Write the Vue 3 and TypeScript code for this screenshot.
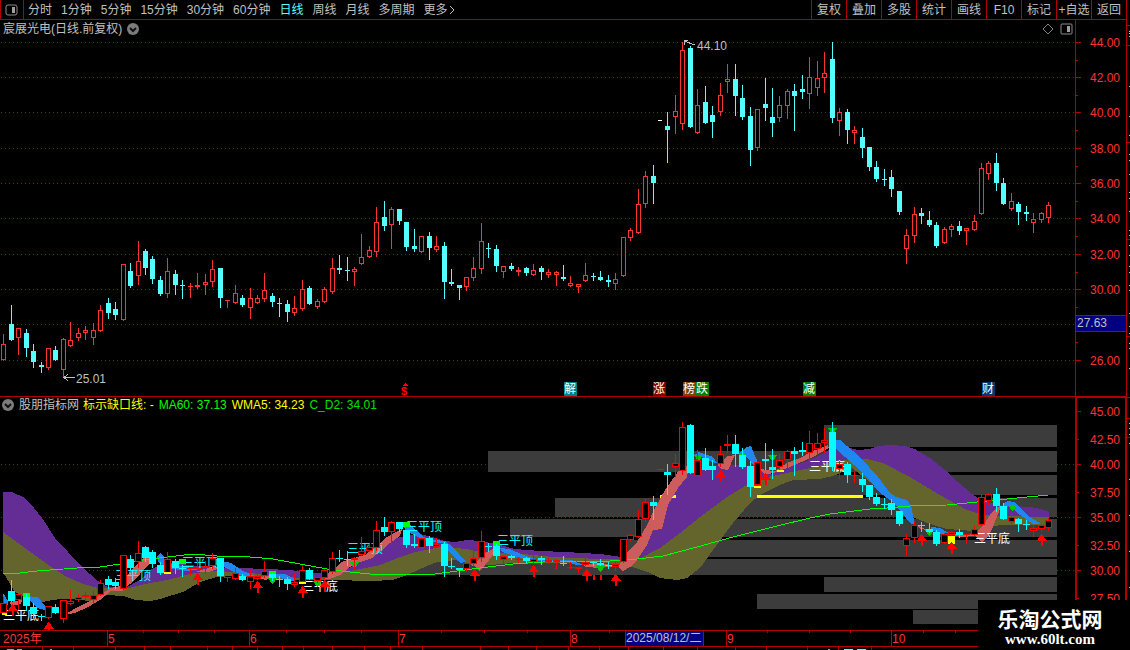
<script setup lang="ts">
import { ref } from 'vue'

type Candle = { x: number; up: boolean; h: number; t: number; b: number; l: number }

const periods = ['分时', '1分钟', '5分钟', '15分钟', '30分钟', '60分钟', '日线', '周线', '月线', '多周期', '更多']
const tools = ['复权', '叠加', '多股', '统计', '画线', 'F10', '标记', '+自选', '返回']
const active = ref('日线')

// one entry per session: direction, high, body top, body bottom, low
const source = `R334,344,360,360 C305,324,340,340 R328,328,338,354 C329,333,348,356 C344,351,362,367 C362,365,367,372 R348,348,368,369
C346,350,360,360 R338,339,370,376 R322,340,346,346 R328,333,338,340 R326,330,333,339 R323,330,338,344 R305,310,331,331
C298,303,313,318 C302,309,315,319 R264,264,320,320 C263,271,286,287 R241,261,276,284 C249,251,268,274 C256,259,279,283
C276,280,294,295 R258,271,294,297 C270,274,285,294 C280,285,286,298 R283,286,287,297 R273,285,287,288 R274,282,285,294
R260,269,282,286 C268,268,298,307 R300,300,301,307 R285,293,303,303 C295,298,305,306 R288,298,308,318 R295,298,303,303
R273,290,299,301 C293,296,302,306 C298,303,304,316 C300,304,312,321 R296,308,313,315 R280,289,309,310 C286,288,304,304
R299,301,307,308 R287,289,302,302 R258,268,292,293 C255,268,270,273 C257,270,271,280 R267,269,272,285 R234,257,264,264
R246,250,257,257 R207,222,252,256 C201,217,226,230 R207,209,225,248 C209,209,221,224 C222,222,247,250 C229,246,249,251
R236,236,252,252 C232,236,248,259 R236,246,250,251 C242,246,282,298 C269,282,284,285 C285,285,288,299 R277,277,287,290
R257,268,278,280 R223,241,269,273 C243,248,249,257 C245,249,266,271 R266,266,272,277 C263,266,269,270 R267,270,272,275
C267,268,273,275 R264,270,275,275 C266,268,272,279 R269,272,275,277 R271,272,275,285 C265,277,279,280 R276,283,286,286
R284,284,287,292 R263,275,281,281 C273,276,277,280 C271,277,280,280 C275,280,282,286 R273,279,284,289 R237,237,276,276
R228,230,238,240 R189,204,233,233 R171,176,204,207 C165,176,183,203 G120,120,121,121 C112,126,130,162 R95,111,117,133
R42,50,124,129 C46,48,127,127 R89,105,133,133 C86,102,123,123 C106,115,122,137 R83,95,112,115 R64,79,82,92
C64,79,96,115 C85,98,117,119 C107,116,150,165 R109,109,148,150 C78,104,108,120 C88,117,123,136 R96,105,118,121
R89,91,106,118 C84,91,96,130 C75,89,92,98 R57,77,94,108 R61,78,88,95 R52,73,78,92 C42,59,118,122
R108,112,121,135 C109,112,130,143 R126,130,133,143 C128,137,148,157 C147,147,167,170 C161,167,179,181 C169,179,180,185
C170,177,189,196 C191,191,212,214 R229,235,249,263 R207,214,236,242 C208,213,216,223 C211,220,225,226 C222,225,246,247
R227,229,243,243 R224,226,230,236 C221,226,231,234 R228,228,231,244 R215,221,230,230 R163,168,214,214 R161,163,174,179
C153,163,183,190 C178,183,204,204 R193,201,209,210 C202,204,212,224 C206,212,214,220 R213,219,223,232 R212,213,220,222
R202,205,218,222`

const gapIndex = 88
const all: Candle[] = source.split(/\s+/).map((s, i) => {
  const [h, t, b, l] = s.slice(1).split(',').map(Number)
  return { x: Math.round(3.2 + 7.464 * i), up: s[0] !== 'C', h, t, b, l }
})
const daily = all.filter((_, i) => i !== gapIndex)
const gap = all[gapIndex]
const rescale = (y: number) => Math.round(570.5 - (289.5 - y) * 0.601)
const study = daily.map((c) => {
  const t = rescale(c.t)
  return { ...c, h: rescale(c.h), t, b: Math.max(rescale(c.b), t + 1), l: rescale(c.l) }
})

const upperGrid = [42, 77, 112, 148, 183, 218, 254, 289, 324, 360]
const upperLabels = [[42, '44.00'], [77, '42.00'], [112, '40.00'], [148, '38.00'], [183, '36.00'], [218, '34.00'], [254, '32.00'], [289, '30.00'], [360, '26.00']] as [number, string][]
const upperMinor = [60, 95, 130, 166, 201, 236, 272, 307, 342]
const lowerGrid = [464, 517, 570]
const lowerLabels = [[411, '45.00'], [439, '42.50'], [464, '40.00'], [492, '37.50'], [517, '35.00'], [545, '32.50'], [570, '30.00'], [598, '27.50']] as [number, string][]

const tags = [[564, '解', '#008080'], [653, '涨', '#800000'], [683, '榜', '#804000'], [696, '跌', '#008000'], [803, '减', '#008000'], [982, '财', '#003870']] as [number, string, string][]

// volume-profile rows: left, top, height
const profile = [[824, 425, 22], [488, 451, 21], [700, 475, 20], [555, 498, 19], [510, 519, 18], [623, 540, 17], [405, 559, 16], [824, 577, 15], [757, 594, 15], [913, 610, 14]]

const purple = '3,492 12,492 25,498 34,508 42,518 55,538 68,552 81,566 98,581 108,587 125,588 140,580 152,569 165,562 190,565 215,568 240,568 265,569 290,570 310,573 330,573 345,570 360,562 375,552 388,542 400,537 420,534 432,537 445,541 455,542 467,540 480,541 500,545 515,549 540,551 565,552 600,554 622,557 640,548 655,520 668,500 678,482 690,470 705,467 720,465 746,465 760,471 772,474 787,467 805,462 820,455 832,448 847,447 858,450 870,449 878,446 890,445 905,446 915,449 930,458 945,470 958,482 972,494 982,501 995,504 1012,506 1030,507 1040,509 1049,512 1049,518 1000,518 982,516 967,510 940,495 910,477 883,463 867,459 853,459 833,462 810,468 787,473 763,478 747,485 727,497 700,517 680,533 660,548 637,560 600,560 553,558 513,554 480,552 467,549 440,547 415,552 400,557 380,565 360,570 340,574 320,578 300,579 270,576 240,573 210,572 190,575 167,580 145,585 125,590 98,589 83,584 65,576 47,564 25,548 3,532'
const olive = '3,532 25,548 47,564 65,576 83,584 98,588 125,589 145,584 167,580 190,574 210,571 240,572 270,575 300,578 320,577 340,573 360,569 380,565 400,557 415,552 440,547 455,548 467,549 480,552 513,553 553,557 600,559 637,560 660,548 680,533 700,517 727,497 747,485 763,478 787,473 810,468 833,462 853,459 867,459 883,463 910,477 940,495 967,510 982,515 1000,516 1049,517 1049,525 1000,525 985,528 973,531 947,529 930,524 915,518 905,512 885,494 865,478 852,468 833,476 820,479 793,480 780,485 760,495 750,503 733,523 713,550 700,568 687,578 677,580 660,578 650,573 633,567 600,562 553,563 513,563 480,566 455,560 437,562 420,569 407,575 393,580 370,581 333,580 300,580 267,578 233,576 217,577 200,582 183,592 160,599 150,601 136,600 123,596 107,595 90,601 70,599 60,599 47,601 37,603 15,592 3,572'
const average = '3,574 20,573 37,571 77,568 100,567 120,564 143,560 167,557 193,554 217,556 250,557 273,559 300,564 327,569 350,572 370,574 400,574 427,575 450,572 480,568 513,564 543,562 577,561 610,561 637,559 663,556 697,547 733,537 773,527 810,518 830,514 870,509 887,508 910,506 947,505 977,502 1007,499 1048,495'

const rising = [
  '9,603 14,601 22,600 21,604 12,606',
  '67,613 80,606 92,600 102,594 110,588 120,586 130,572 140,561 147,556 152,557 150,563 140,574 130,584 122,591 111,591 100,600 88,607 75,613 68,614',
  '195,572 205,569 216,566 217,569 208,572',
  '257,578 265,576 272,576 266,580',
  '299,579 308,576 302,582',
  '325,576 335,568 342,562 350,559 365,555 376,547 385,538 402,529 400,536 390,543 382,550 372,558 360,562 350,567 340,575 330,579 325,579',
  '470,565 478,561 485,553 495,548 496,551 485,565 480,571 474,566',
  '583,564 600,563 617,566 600,568 585,567',
  '618,567 627,553 637,542 647,525 655,508 665,490 677,473 682,467 689,466 687,477 678,488 668,505 662,529 653,530 647,545 637,560 630,567 623,571',
  '717,465 728,456 735,455 728,470 722,469',
  '758,467 765,470 775,471 787,463 800,458 813,451 828,445 829,448 813,457 790,467 777,472 765,475',
  '915,524 925,529 934,531 920,529',
  '950,534 973,534 982,527 990,515 997,507 1001,506 993,527 987,538 982,542 975,536 960,537',
]
const falling = [
  '3,593 8,601 8,605 3,603',
  '24,596 38,597 45,606 45,610 37,608 30,601',
  '157,556 160,553 164,557 165,562 185,567 200,569 187,571 167,568 158,562',
  '222,561 231,563 243,571 255,576 250,577 240,575 222,566',
  '272,574 285,574 295,579 293,581 280,578 272,577',
  '403,525 410,525 416,530 423,537 435,540 445,541 453,547 466,562 460,563 450,553 443,543 430,542 420,538 406,531',
  '500,548 510,549 523,555 540,560 572,560 583,565 577,565 567,562 537,561 517,557 502,552',
  '693,456 699,452 713,457 718,464 710,461 702,457',
  '739,453 747,447 751,446 758,463 755,467 747,457',
  '836,440 840,440 860,457 878,477 890,493 896,497 907,500 911,506 915,525 910,523 902,513 893,502 880,493 863,473 836,449',
  '931,527 940,528 949,533 941,534 931,530',
  '1003,504 1008,501 1014,502 1027,515 1041,524 1033,524 1017,513 1010,506 1003,508',
]
const upArrows = [[12, 604], [48, 622], [197, 573], [257, 581], [302, 586], [324, 580], [474, 569], [533, 565], [586, 569], [615, 574], [720, 470], [765, 473], [921, 534], [951, 542], [1041, 534]]
const downArrows = [[272, 578], [317, 581], [354, 562], [600, 566], [698, 455], [742, 453], [772, 455], [832, 428], [929, 530], [1012, 505]]
const greenMarks = [[23, 593], [179, 559], [269, 571], [403, 522], [493, 541]]
const topLabels = [[115, 580], [182, 567], [347, 553], [406, 531], [497, 545]]
const bottomLabels = [[3, 620], [302, 591], [809, 471], [974, 543]]
const months = [[107, '5'], [249, '6'], [398, '7'], [570, '8'], [726, '9'], [891, '10']] as [number, string][]
const monthTicks = [143, 178, 214, 286, 324, 361, 441, 484, 527, 609, 767, 809, 850, 923, 955]
const footTicks = [42, 73, 115, 144, 170, 207, 232, 257, 282, 303, 332, 364, 390, 422, 480, 508, 536, 568, 599, 628, 663, 697, 735, 766, 807, 838, 871]
const edgeDots = [31, 33, 36, 86, 116, 135, 154, 160, 174, 192, 198, 211, 230, 235, 245, 255, 266, 272, 285, 290, 313, 326, 333, 343, 348, 368, 423, 428, 434, 443, 479, 515, 551, 587]
const edgeLines = [25, 45, 142, 239, 336, 397, 418, 437]
</script>

<template>
  <main class="terminal">
    <nav class="toolbar">
      <button class="layout" aria-label="侧栏">
        <svg width="14" height="12" viewBox="0 0 14 12"><rect x="1" y="1" width="11" height="10" rx="2" fill="none" stroke="#8c8c8c" stroke-width="1" /><rect x="7" y="3" width="3" height="6" fill="#a0a0a0" /></svg>
      </button>
      <div class="periods">
        <button v-for="p in periods" :key="p" :class="{ active: active === p }" @click="active = p">{{ p }}<svg v-if="p === '更多'" width="8" height="10" viewBox="0 0 8 10"><path d="M2 1l4 4-4 4" fill="none" stroke="#c0c0c0" /></svg></button>
      </div>
      <div class="tools">
        <button v-for="t in tools" :key="t">{{ t }}</button>
      </div>
    </nav>

    <section class="panel price">
      <header class="caption">
        <h1>宸展光电(日线.前复权)</h1>
        <button aria-label="展开"><svg width="12" height="12" viewBox="0 0 12 12"><circle cx="6" cy="6" r="6" fill="#7c7c7c" /><path d="M3 5l3 3 3-3" fill="none" stroke="#111" stroke-width="2" /></svg></button>
        <span class="corner">
          <svg width="12" height="12" viewBox="0 0 12 12"><path d="M6 1l5 5-5 5-5-5z" fill="none" stroke="#808080" /></svg>
          <svg width="13" height="12" viewBox="0 0 13 12"><rect x="1" y="1" width="11" height="10" rx="1" fill="none" stroke="#8c8c8c" /><rect x="7" y="3" width="3" height="6" fill="#a0a0a0" /></svg>
        </span>
      </header>
      <svg class="plot" viewBox="0 20 1075 376" shape-rendering="crispEdges">
        <g fill="#b00000"><line v-for="y in upperGrid" :key="y" x1="1" x2="1075" :y1="y + 0.5" :y2="y + 0.5" stroke="#b00000" stroke-dasharray="1 3" /></g>
        <g v-for="c in daily" :key="c.x" :fill="c.up ? '#ff3232' : '#54ffff'">
          <rect :x="c.x" :y="c.h" width="1" :height="c.l - c.h + 1" />
          <rect :x="c.x - 2" :y="c.t" width="5" :height="c.b - c.t" />
          <rect v-if="c.up && c.b - c.t > 2" :x="c.x - 1" :y="c.t + 1" width="3" :height="c.b - c.t - 2" fill="#000" />
        </g>
        <rect :x="gap.x - 2" :y="gap.t" width="4" height="1" fill="#fff" />
        <g fill="none" stroke="#c0c0c0"><path d="M64 377.500h11M68 374l-4 3.500 4 3.500" /><path d="M695 45l-11-4M684 45v-5h4" /></g>
        <g class="note"><text x="76" y="383">25.01</text><text x="697" y="50">44.10</text></g>
        <text class="dividend" x="401" y="395">$</text>
        <path d="M402 386l3-3 3 3z" fill="#f00" />
        <g v-for="[x, s, c] in tags" :key="x"><rect :x="x" y="382" width="13" height="14" :fill="c" /><text class="tag" :x="x" y="393">{{ s }}</text></g>
      </svg>
      <svg class="scale" viewBox="1075 20 52 376" shape-rendering="crispEdges">
        <g fill="#b00000">
          <rect x="1075" y="20" width="1" height="376" /><rect x="1126" y="20" width="1" height="376" />
          <rect v-for="y in upperGrid" :key="y" x="1076" :y="y" width="5" height="1" />
          <rect v-for="y in upperMinor" :key="y" x="1076" :y="y" width="2" height="1" />
        </g>
        <rect x="1076" y="315" width="50" height="17" fill="#b00000" /><rect x="1076" y="316" width="50" height="15" fill="#000080" />
        <text class="cursor" x="1077" y="327">27.63</text>
        <text v-for="[y, s] in upperLabels" :key="y" class="value" x="1090" :y="y + 5">{{ s }}</text>
      </svg>
    </section>

    <section class="panel study">
      <header class="caption">
        <button aria-label="指标菜单"><svg width="12" height="12" viewBox="0 0 12 12"><circle cx="6" cy="6" r="6" fill="#7c7c7c" /><path d="M3 5l3 3 3-3" fill="none" stroke="#111" stroke-width="2" /></svg></button>
        <h2>股朋指标网</h2>
        <span class="yellow">标示缺口线: -</span>
        <span class="green">MA60: 37.13</span>
        <span class="yellow">WMA5: 34.23</span>
        <span class="green dim">C_D2: 34.01</span>
      </header>
      <svg class="plot" viewBox="0 397 1075 233" shape-rendering="crispEdges">
        <line v-for="y in lowerGrid" :key="y" x1="1" x2="1075" :y1="y + 0.5" :y2="y + 0.5" stroke="#b00000" stroke-dasharray="1 3" />
        <rect v-for="[x, y, h] in profile" :key="y" :x="x" :y="y" :width="1057 - x" :height="h" fill="#3c3c3c" />
        <polygon :points="purple" fill="#642d96" />
        <polygon :points="olive" fill="#64642d" />
        <g fill="#ff0"><rect x="660" y="495" width="16" height="3" /><rect x="757" y="495" width="106" height="3" /></g>
        <polygon v-for="p in rising" :key="p" :points="p" fill="#cd5c5c" />
        <polygon v-for="p in falling" :key="p" :points="p" fill="#1e87f0" />
        <polyline :points="average" fill="none" stroke="#0f0" />
        <g class="mark cyan"><text v-for="[x, y] in topLabels" :key="x" :x="x" :y="y">三平顶</text></g>
        <g class="mark"><text v-for="[x, y] in bottomLabels" :key="x" :x="x" :y="y">三平底</text></g>
        <g fill="#0f0"><rect v-for="[x, y] in greenMarks" :key="x" :x="x" :y="y" width="7" height="5" /></g>
        <g v-for="[x, y] in downArrows" :key="x" fill="#00c800"><path :d="`M${x - 4} ${y}h9l-4 6h-1z`" /></g>
        <g v-for="c in study" :key="c.x" :fill="c.up ? '#ff0000' : '#00ffff'">
          <rect :x="c.x" :y="c.h" width="1" :height="c.l - c.h + 1" />
          <rect :x="c.x - 3" :y="c.t" width="7" :height="c.b - c.t" />
          <rect v-if="c.up && c.b - c.t > 2" :x="c.x - 2" :y="c.t + 1" width="5" :height="c.b - c.t - 2" fill="#000" />
        </g>
        <rect :x="gap.x - 3" y="469" width="7" height="1" fill="#f00" />
        <g fill="#ff0"><rect x="2" y="613" width="5" height="2" /><rect x="164" y="572" width="7" height="2" /><rect x="299" y="582" width="7" height="2" /><rect x="754" y="486" width="7" height="2" /><rect x="777" y="470" width="7" height="2" /><rect x="948" y="536" width="7" height="8" /></g>
        <g v-for="[x, y] in upArrows" :key="x" fill="#f00"><path :d="`M${x} ${y}h1l5 7h-4v5h-2v-5h-4z`" /></g>
        <g fill="#f00"><rect x="593" y="575" width="2" height="5" /><rect x="600" y="575" width="2" height="5" /></g>
      </svg>
      <svg class="scale" viewBox="1075 397 52 233" shape-rendering="crispEdges">
        <g fill="#b00000">
          <rect x="1075" y="397" width="2" height="233" /><rect x="1125" y="397" width="2" height="233" /><rect x="1075" y="397" width="52" height="1" />
          <rect v-for="([y], i) in lowerLabels" :key="y" x="1077" :y="y" :width="i % 2 ? 2 : 4" height="1" />
        </g>
        <text v-for="[y, s] in lowerLabels" :key="y" class="value" x="1090" :y="y + 5">{{ s }}</text>
      </svg>
    </section>

    <footer class="timeline">
      <svg viewBox="0 630 1127 20" shape-rendering="crispEdges">
        <g fill="#b00000">
          <rect x="0" y="630" width="1127" height="1" /><rect x="0" y="646" width="1127" height="1" />
          <rect v-for="[x] in months" :key="x" :x="x" y="630" width="1" height="17" />
          <rect v-for="x in monthTicks" :key="x" :x="x" y="631" width="1" height="2" />
          <rect v-for="x in footTicks" :key="x" :x="x" y="647" width="1" height="3" />
        </g>
        <text class="value" x="3" y="643">2025年</text>
        <text v-for="[x, s] in months" :key="x" class="value" :x="x + 1" y="643">{{ s }}</text>
        <rect x="625" y="630" width="79" height="17" fill="#b00000" /><rect x="626" y="631" width="77" height="15" fill="#000080" />
        <text class="cursor" x="626" y="642">2025/08/12/二</text>
        <g fill="#a0a0a0"><rect x="7" y="649" width="7" height="1" /><rect x="17" y="649" width="5" height="1" /><rect x="50" y="649" width="2" height="1" /><rect x="828" y="649" width="2" height="1" /></g>
        <g fill="#54ffff"><rect x="844" y="649" width="9" height="1" /><rect x="857" y="649" width="9" height="1" /></g>
      </svg>
    </footer>

    <svg class="edge" viewBox="1127 0 3 650" shape-rendering="crispEdges">
      <rect v-for="y in edgeLines" :key="y" x="1127" :y="y" width="3" height="1" fill="#b00000" />
      <rect v-for="y in edgeDots" :key="y" x="1129" :y="y" width="1" height="1" fill="#c0c0c0" />
    </svg>
    <aside class="brand"><strong>乐淘公式网</strong><span>www.60lt.com</span></aside>
  </main>
</template>

<style>
body { background: #000; }
</style>

<style scoped>
.terminal {
  position: relative;
  display: grid;
  grid-template-columns: 1127fr 3fr;
  background: #000;
  color: #c0c0c0;
  font: 12px/16px "Liberation Sans", "Noto Sans CJK SC", sans-serif;
  overflow: hidden;
}
.toolbar, .panel, .timeline { grid-column: 1; }
.edge { grid-column: 2; grid-row: 1 / 5; width: 100%; display: block; }
.toolbar {
  display: flex;
  height: 20px;
  box-sizing: border-box;
  border-bottom: 1px solid #b00000;
  border-right: 1px solid #b00000;
}
button { padding: 0; border: 0; background: none; color: inherit; font: inherit; white-space: nowrap; cursor: pointer; }
.layout { width: 24px; border: solid #b00000; border-width: 0 1px; display: flex; align-items: center; justify-content: center; }
.periods { display: flex; gap: 9px; padding-left: 4px; }
.periods button { display: flex; align-items: center; }
.periods .active { color: #54ffff; }
.tools { display: grid; grid-template-columns: repeat(9, 35px); margin-left: auto; }
.tools button { border-left: 1px solid #b00000; }
.panel { position: relative; display: grid; grid-template-columns: 1075fr 52fr; }
.price { border-bottom: 1px solid #b00000; }
.panel svg { display: block; }
.plot, .scale, .timeline svg { width: 100%; display: block; }
.caption { position: absolute; top: 1px; left: 3px; width: calc(95.4% - 5px); display: flex; align-items: center; }
.caption button { margin-left: 5px; }
.caption h1, .caption h2 { margin: 0; font: inherit; }
.corner { display: flex; gap: 6px; margin-left: auto; }
.study .caption { left: 2px; top: 0; gap: 5px; }
.study .caption button { margin: 0; }
.study h2 { margin-right: -1px; }
.yellow { color: #ff0; }
.green { color: #0f0; }
.dim { color: #00e000; }
.value { fill: #ff3232; }
.cursor, .note { fill: #c0c0c0; }
.tag { fill: #fff; }
.mark { fill: #fff; }
.cyan { fill: #00ffff; }
.dividend { fill: #f00; font-weight: bold; font-size: 11px; }
.brand {
  position: absolute;
  right: 0;
  bottom: 0;
  width: 152px;
  height: 50px;
  box-sizing: border-box;
  padding: 6px 8px 0 0;
  background: #000;
  color: #fff;
  text-align: center;
  display: flex;
  flex-direction: column;
}
.brand strong { font: bold 21px/24px "Noto Sans CJK SC", sans-serif; }
.brand span { font: bold 15px/18px "Liberation Serif", serif; }
</style>
